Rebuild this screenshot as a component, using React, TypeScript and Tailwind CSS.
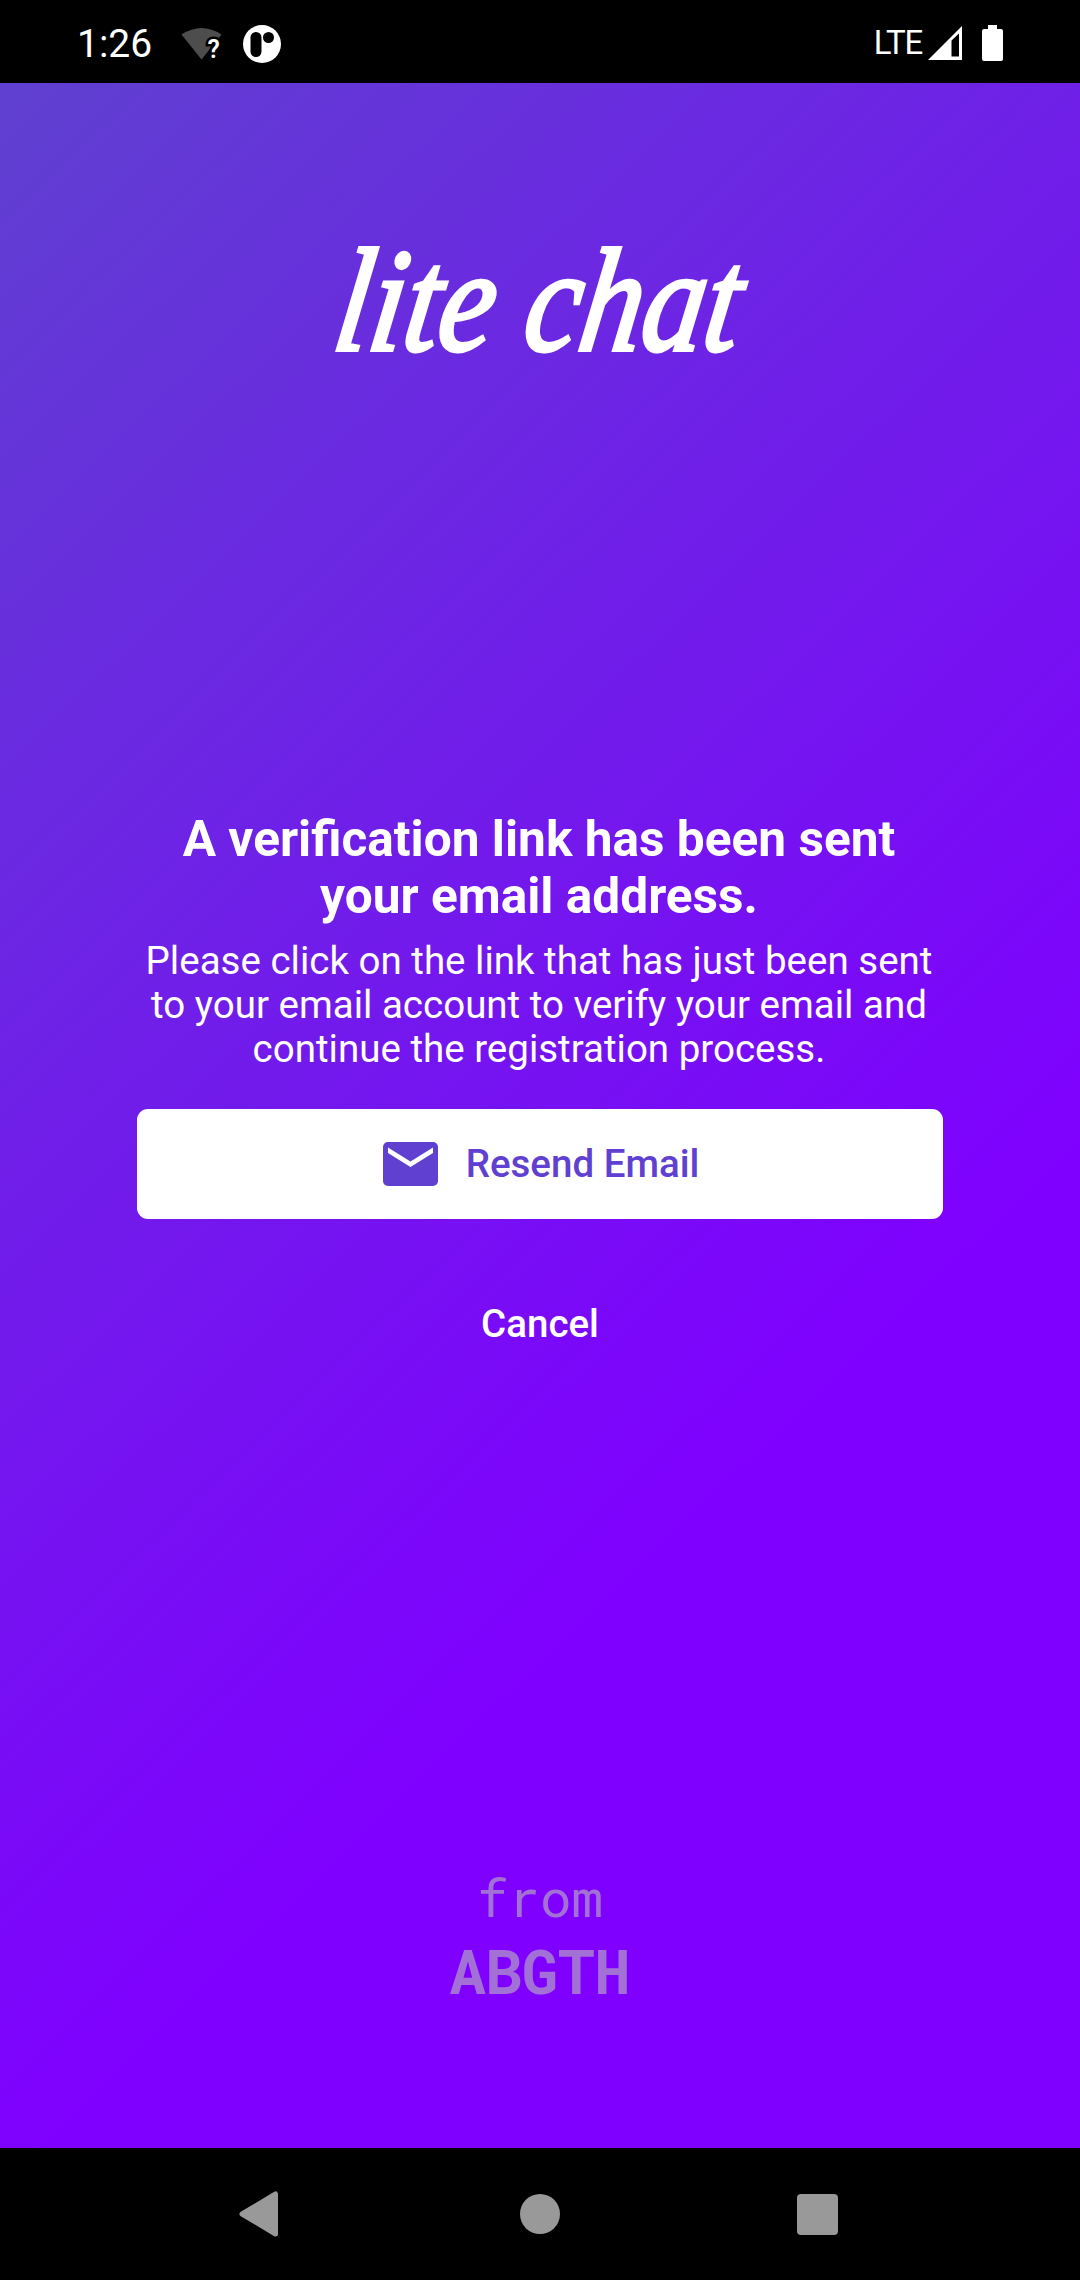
export default function App() {
  return (
    <div className="flex h-[2280px] w-[1080px] flex-col overflow-hidden bg-black font-['Roboto',sans-serif] text-white">
      <header className="flex h-[83px] shrink-0 items-center pl-[77px] pr-[77px]">
        <span className="mt-[5px] w-[82px] text-[39px] leading-[48px]">1:26</span>
        <svg className="ml-[22px] mt-[4px] h-[34px] w-[42px] overflow-visible" viewBox="181 27 42 34">
          <path fill="#4d4d4d" d="M181.500 34.500Q201.500 21.500 221.500 34.500L201.500 59.500Z" />
          <text x="207.500" y="57.500" fill="#fff" stroke="#000" strokeWidth="5" paintOrder="stroke" fontSize="25" fontWeight="600" fontFamily="Roboto">?</text>
        </svg>
        <svg className="ml-[20px] mt-[4px] h-[38px] w-[38px]" viewBox="0 0 38 38">
          <circle cx="19" cy="19" r="19" fill="#fff" />
          <rect x="7.500" y="7" width="11" height="25" rx="5.500" fill="#000" />
          <circle cx="25.500" cy="12.500" r="5.500" fill="#000" />
        </svg>
        <div className="flex-1" />
        <span className="mt-[3px] text-[33px] leading-[40px] tracking-[-1.2px]">LTE</span>
        <svg className="ml-[6px] mt-[3px] h-[34px] w-[34px]" viewBox="0 0 34 34">
          <path fill="#fff" fillRule="evenodd" d="M0 34L34 0V34ZM23.500 14.500V30.500H31V7.500Z" />
        </svg>
        <svg className="ml-[20px] mt-[3px] h-[36px] w-[21px]" viewBox="0 0 21 36">
          <path fill="#fff" d="M6 0H15V4H19Q21 4 21 6V34Q21 36 19 36H2Q0 36 0 34V6Q0 4 2 4H6Z" />
        </svg>
      </header>
      <main className="flex h-[2065px] shrink-0 flex-col items-center bg-[linear-gradient(136deg,#5f40d0_0px,#7f00ff_1515px)]">
        <h1 className="mt-[143px] h-[150px] origin-center -skew-x-[10deg] scale-x-[0.845] whitespace-nowrap font-['Liberation_Serif',cursive] text-[147px] font-normal italic leading-[150px] [-webkit-text-stroke:4px_white]">lite chat</h1>
        <h2 className="mt-[435px] -translate-x-px text-center text-[49.600px] font-bold leading-[57px]">A verification link has been sent<br />your email address.</h2>
        <p className="mt-[14px] -translate-x-px text-center text-[38.500px] leading-[44px]">Please click on the link that has just been sent<br />to your email account to verify your email and<br />continue the registration process.</p>
        <button className="mt-[38px] flex h-[110px] w-[806px] items-center justify-center rounded-[11px] bg-white pl-[2px] text-[38.500px] font-medium text-[#5f40d0]">
          <svg className="mr-[28px] h-[44px] w-[55px]" viewBox="0 0 55 44">
            <rect width="55" height="44" rx="5" fill="#5f40d0" />
            <path d="M5 5.500L27.500 19.500L50 5.500V11L27.500 25L5 11Z" fill="#fff" />
          </svg>
          Resend Email
        </button>
        <button className="mt-[83px] text-[38.500px] font-medium leading-[44px]">Cancel</button>
        <footer className="mt-[517px] flex flex-col items-center font-['Roboto_Mono','DejaVu_Sans_Mono',monospace] text-[#a371d5]">
          <span className="text-[52.500px] leading-[68px]">from</span>
          <strong className="text-[60.500px] leading-[80px]">ABGTH</strong>
        </footer>
      </main>
      <nav className="flex h-[132px] items-center pl-[239px]">
        <svg className="h-[46px] w-[40px]" viewBox="0 0 40 46">
          <path fill="#999" stroke="#999" strokeWidth="5" strokeLinejoin="round" d="M3 23L36.500 3V43Z" />
        </svg>
        <div className="ml-[241px] h-10 w-10 rounded-full bg-[#999]" />
        <div className="ml-[237px] h-[41px] w-[41px] rounded-[4px] bg-[#999]" />
      </nav>
    </div>
  );
}
